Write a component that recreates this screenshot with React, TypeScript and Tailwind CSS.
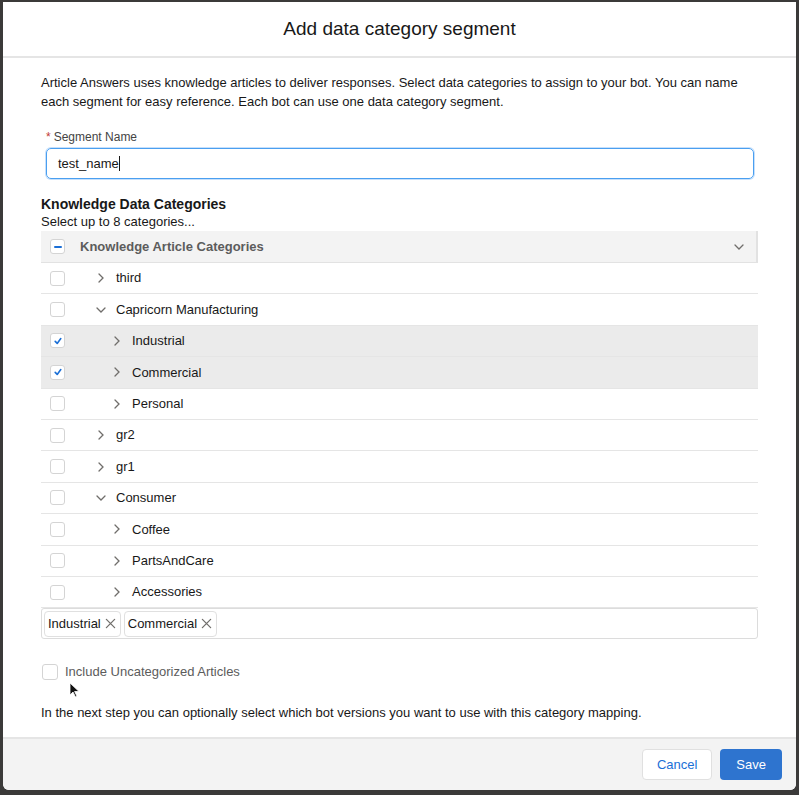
import React from 'react';

/** Add data category segment — modal dialog */

type Row = {
  label: string;
  level: 1 | 2;
  expanded?: boolean;
  checked?: boolean;
};

const ROWS: Row[] = [
  { label: 'third', level: 1 },
  { label: 'Capricorn Manufacturing', level: 1, expanded: true },
  { label: 'Industrial', level: 2, checked: true },
  { label: 'Commercial', level: 2, checked: true },
  { label: 'Personal', level: 2 },
  { label: 'gr2', level: 1 },
  { label: 'gr1', level: 1 },
  { label: 'Consumer', level: 1, expanded: true },
  { label: 'Coffee', level: 2 },
  { label: 'PartsAndCare', level: 2 },
  { label: 'Accessories', level: 2 },
];

const SELECTED = ['Industrial', 'Commercial'];

function Chevron({ down = false }: { down?: boolean }) {
  return (
    <svg width="10" height="10" viewBox="0 0 10 10" className="shrink-0">
      {down ? (
        <path d="M1 3 L5 7 L9 3" fill="none" stroke="#706e6b" strokeWidth="1.3" strokeLinecap="round" />
      ) : (
        <path d="M3 1 L7 5 L3 9" fill="none" stroke="#706e6b" strokeWidth="1.3" strokeLinecap="round" />
      )}
    </svg>
  );
}

function Checkbox({ checked = false, partial = false }: { checked?: boolean; partial?: boolean }) {
  return (
    <span className="w-[15px] h-[15px] shrink-0 rounded-[3px] border border-[#d4d4d4] bg-white flex items-center justify-center">
      {checked && (
        <svg width="8" height="8" viewBox="0 0 10 10">
          <path d="M1.5 5.5 L4 8 L8.5 2" fill="none" stroke="#1b6fd6" strokeWidth="2" strokeLinecap="round" strokeLinejoin="round" />
        </svg>
      )}
      {partial && <span className="w-[8px] h-[2px] bg-[#1b6fd6] rounded-sm" />}
    </span>
  );
}

function CloseX() {
  return (
    <svg width="11" height="11" viewBox="0 0 12 12" className="shrink-0">
      <path d="M1.5 1.5 L10.5 10.5 M10.5 1.5 L1.5 10.5" stroke="#706e6b" strokeWidth="1.4" strokeLinecap="round" />
    </svg>
  );
}

export default function App() {
  return (
    <div
      className="w-[799px] h-[795px] bg-[#3b3a39] pt-[2px] pl-[3px] pr-[3px] pb-[5px] text-[#181818] relative"
      style={{ fontFamily: '"Liberation Sans", Arial, sans-serif' }}
    >
      <div className="h-full bg-white rounded-b-md flex flex-col overflow-hidden">
        {/* header */}
        <div className="h-[56px] shrink-0 border-b-2 border-[#e5e5e5] flex items-center justify-center">
          <h1 className="text-[19px] text-[#181818]">Add data category segment</h1>
        </div>

        {/* body */}
        <div className="flex-1 pl-[38px] pr-[40px] pt-[15px]">
          <p className="text-[13px] leading-[19px] text-[#181818] pr-[10px]">
            Article Answers uses knowledge articles to deliver responses. Select data categories to assign to your bot. You can name
            each segment for easy reference. Each bot can use one data category segment.
          </p>

          <div className="mt-[18px] pl-[5px] pr-[2px]">
            <label className="text-[12px] text-[#444444] flex items-center h-[16px]">
              <span className="text-[#c23934] mr-[3px]">*</span>Segment Name
            </label>
            <div className="mt-[3px] h-[31px] rounded-[5px] border border-[#4a9ff0] shadow-[0_0_0_1px_#c7e0fb] flex items-center px-[11px] text-[13px]">
              test_name<span className="w-px h-[15px] bg-[#181818]" />
            </div>
          </div>

          <h2 className="mt-[16px] text-[14px] font-bold leading-[18px]">Knowledge Data Categories</h2>
          <p className="text-[13px] leading-[18px] text-[#181818]">Select up to 8 categories...</p>

          {/* tree */}
          <div className="mr-[-2px]">
            <div className="h-[32px] bg-[#f3f3f3] border-b border-r-2 border-[#e2e2e2] flex items-center pl-[9px] pr-[12px]">
              <Checkbox partial />
              <span className="ml-[15px] text-[13px] font-bold text-[#5c5c5c] flex-1">Knowledge Article Categories</span>
              <Chevron down />
            </div>
            {ROWS.map((row) => (
              <div
                key={row.label}
                className={`h-[31.4px] border-b border-[#e5e5e5] flex items-center pl-[9px] ${row.checked ? 'bg-[#ebebeb]' : 'bg-white'}`}
              >
                <Checkbox checked={row.checked} />
                <span className={`flex items-center ${row.level === 1 ? 'ml-[31px]' : 'ml-[47px]'}`}>
                  <Chevron down={row.expanded} />
                </span>
                <span className="ml-[10px] text-[13px] text-[#181818]">{row.label}</span>
              </div>
            ))}
            <div className="h-[31px] border border-[#dcdcdc] rounded-[3px] flex items-center gap-[3px] px-[2px]">
              {SELECTED.map((s) => (
                <span key={s} className="h-[26px] border border-[#e0e0e0] rounded-[4px] flex items-center gap-[4px] pl-[3px] pr-[4px] text-[13px]">
                  {s}
                  <CloseX />
                </span>
              ))}
            </div>
          </div>

          <div className="mt-[23px] flex items-center">
            <span className="w-[16px] h-[16px] rounded-[3px] border border-[#d4d4d4] bg-white ml-[1px]" />
            <span className="ml-[7px] text-[13px] text-[#5c5c5c]">Include Uncategorized Articles</span>
          </div>

          <p className="mt-[21px] text-[13px] text-[#181818]">
            In the next step you can optionally select which bot versions you want to use with this category mapping.
          </p>
        </div>

        {/* footer */}
        <div className="h-[53px] shrink-0 bg-[#f3f3f3] border-t-2 border-[#e5e5e5] flex items-center justify-end gap-[8px] pr-[14px]">
          <button className="h-[31px] px-[14px] rounded-[4px] border border-[#e0e0e0] bg-white text-[13px] text-[#1b6fd6]">
            Cancel
          </button>
          <button className="h-[31px] px-[16px] rounded-[4px] bg-[#2e74cf] text-[13px] text-white">Save</button>
        </div>
      </div>

      {/* mouse pointer */}
      <svg className="absolute left-[69px] top-[682px]" width="11" height="16" viewBox="0 0 11 16">
        <path d="M1 1 L1 13 L4 10 L6.5 15 L8 14.3 L5.6 9.5 L10 9.5 Z" fill="#111" stroke="#fff" strokeWidth="0.8" />
      </svg>
    </div>
  );
}
